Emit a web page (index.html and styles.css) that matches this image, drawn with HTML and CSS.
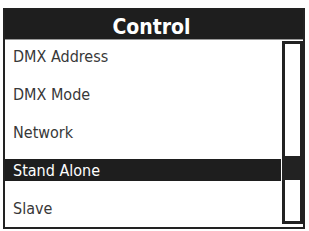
FILE: index.html
```html
<!DOCTYPE html>
<html>
<head>
<meta charset="utf-8">
	<title>Control</title>

	<link rel="stylesheet" href="styles.css">
</head>
<body>

<div class="screen">
	<div class="title">Control</div>
	<div class="content">
		<div class="menu">
			<div class="row">DMX Address</div>
			<div class="row">DMX Mode</div>
			<div class="row">Network</div>
			<div class="row active">Stand Alone</div>
			<div class="row">Slave</div>
		</div>
		<div class="scrollbar">
			<div class="thumb"></div>
		</div>
	</div>
</div>

</body>
</html>
```

FILE: styles.css
```css
body{
	margin: 0;
	background: #fff;
}
.screen{
	margin: 8px 0 0 3px;
	width: 302px;
	height: 221px;
	box-sizing: border-box;
	border: 2px solid #222;
	display: flex;
	flex-direction: column;
}
.title{
	height: 30px;
	flex: none;
	background: #1e1e1e;
	color: #fff;
	font-family: "DejaVu Sans", sans-serif;
	font-stretch: condensed;
	font-weight: bold;
	font-size: 21px;
	line-height: 34px;
	text-align: center;
	padding-right: 5px;
	border-bottom: 1px solid #999;
	box-sizing: border-box;
}
.content{
	flex: 1;
	display: flex;
}
.menu{
	width: 276px;
	padding-top: 5px;
	display: flex;
	flex-direction: column;
	gap: 16px;
}
.row{
	height: 22px;
	line-height: 23px;
	padding-left: 8px;
	font-family: "DejaVu Sans", sans-serif;
	font-stretch: condensed;
	font-size: 16px;
	color: #383838;
}
.row.active{
	background: #1e1e1e;
	color: #fff;
}
.scrollbar{
	margin: 1px 0 3px 1px;
	width: 21px;
	box-sizing: border-box;
	border: 3px solid #222;
}
.thumb{
	margin-top: 112px;
	height: 24px;
	background: #222;
}
```
